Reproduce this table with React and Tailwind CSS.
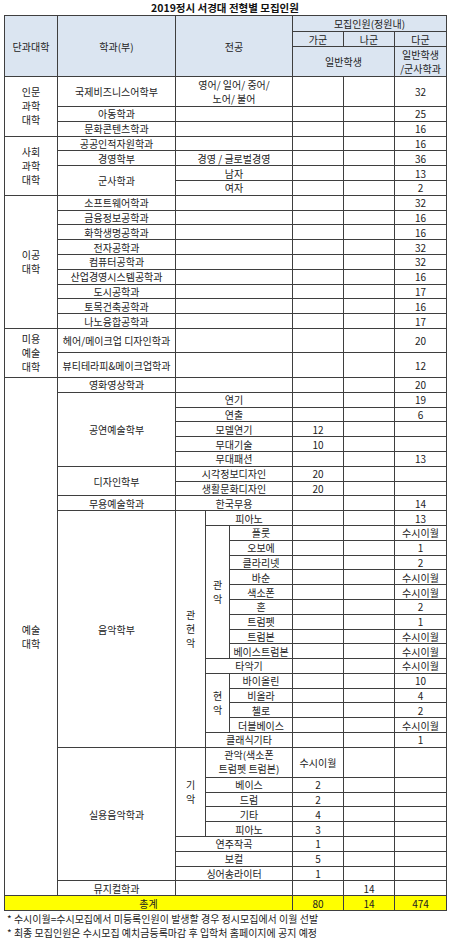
import React from "react";

const font = { fontFamily: '"Noto Sans CJK KR", "Noto Sans", sans-serif' };

const Td = ({ children, className = "", ...props }) => (
  <td
    className={`border border-[#3f3f3f] p-0 text-center align-middle ${className}`}
    {...props}
  >
    {children}
  </td>
);

// multi-line cell text, a little more air between the lines
const Lines = ({ items }) => (
  <span className="block leading-[14px]">
    {items.map((t, i) => (
      <span key={i} className="block">
        {t}
      </span>
    ))}
  </span>
);

// three 모집인원 columns: 가군 / 나군 / 다군
const nums = (a = "", b = "", c = "") => (
  <>
    <Td>{a}</Td>
    <Td>{b}</Td>
    <Td>{c}</Td>
  </>
);

const R = "h-[14.8px]";

const App = () => {
  return (
    <div className="w-[450px] bg-white text-[#222] text-[10px] leading-[13px]" style={font}>
      {/* title */}
      <h1 className="h-[15px] text-center text-[10.5px] font-bold leading-[15px] text-[#111]">
        2019정시 서경대 전형별 모집인원
      </h1>

      <table className="ml-[4px] w-[442px] table-fixed border-collapse">
        <colgroup>
          <col className="w-[53px]" />
          <col className="w-[118px]" />
          <col className="w-[30px]" />
          <col className="w-[24px]" />
          <col className="w-[63px]" />
          <col className="w-[51px]" />
          <col className="w-[51px]" />
          <col className="w-[52px]" />
        </colgroup>
        <tbody>
          {/* header */}
          <tr className="h-[16px] bg-[#dbe5f1]">
            <Td rowSpan={3}>단과대학</Td>
            <Td rowSpan={3}>학과(부)</Td>
            <Td rowSpan={3} colSpan={3}>전공</Td>
            <Td colSpan={3}>모집인원(정원내)</Td>
          </tr>
          <tr className="h-[15px] bg-[#dbe5f1]">
            <Td>가군</Td>
            <Td>나군</Td>
            <Td>다군</Td>
          </tr>
          <tr className="h-[30px] bg-[#dbe5f1]">
            <Td colSpan={2}>일반학생</Td>
            <Td>
              <Lines items={["일반학생", "/군사학과"]} />
            </Td>
          </tr>

          {/* 인문과학대학 */}
          <tr className="h-[30px]">
            <Td rowSpan={3}>
              <Lines items={["인문", "과학", "대학"]} />
            </Td>
            <Td>국제비즈니스어학부</Td>
            <Td colSpan={3}>
              <Lines items={["영어/ 일어/ 중어/", "노어/ 불어"]} />
            </Td>
            {nums("", "", 32)}
          </tr>
          <tr className={R}>
            <Td>아동학과</Td>
            <Td colSpan={3} />
            {nums("", "", 25)}
          </tr>
          <tr className={R}>
            <Td>문화콘텐츠학과</Td>
            <Td colSpan={3} />
            {nums("", "", 16)}
          </tr>

          {/* 사회과학대학 */}
          <tr className={R}>
            <Td rowSpan={4}>
              <Lines items={["사회", "과학", "대학"]} />
            </Td>
            <Td>공공인적자원학과</Td>
            <Td colSpan={3} />
            {nums("", "", 16)}
          </tr>
          <tr className={R}>
            <Td>경영학부</Td>
            <Td colSpan={3}>경영 / 글로벌경영</Td>
            {nums("", "", 36)}
          </tr>
          <tr className={R}>
            <Td rowSpan={2}>군사학과</Td>
            <Td colSpan={3}>남자</Td>
            {nums("", "", 13)}
          </tr>
          <tr className={R}>
            <Td colSpan={3}>여자</Td>
            {nums("", "", 2)}
          </tr>

          {/* 이공대학 */}
          {[
            ["소프트웨어학과", 32],
            ["금융정보공학과", 16],
            ["화학생명공학과", 16],
            ["전자공학과", 32],
            ["컴퓨터공학과", 32],
            ["산업경영시스템공학과", 16],
            ["도시공학과", 17],
            ["토목건축공학과", 16],
            ["나노융합공학과", 17],
          ].map(([name, n], i) => (
            <tr key={name} className={R}>
              {i === 0 && (
                <Td rowSpan={9}>
                  <Lines items={["이공", "대학"]} />
                </Td>
              )}
              <Td>{name}</Td>
              <Td colSpan={3} />
              {nums("", "", n)}
            </tr>
          ))}

          {/* 미용예술대학 */}
          <tr className="h-[24.5px]">
            <Td rowSpan={2}>
              <Lines items={["미용", "예술", "대학"]} />
            </Td>
            <Td>헤어/메이크업 디자인학과</Td>
            <Td colSpan={3} />
            {nums("", "", 20)}
          </tr>
          <tr className="h-[24.5px]">
            <Td>뷰티테라피&amp;메이크업학과</Td>
            <Td colSpan={3} />
            {nums("", "", 12)}
          </tr>

          {/* 예술대학 */}
          <tr className={R}>
            <Td rowSpan={34}>
              <Lines items={["예술", "대학"]} />
            </Td>
            <Td>영화영상학과</Td>
            <Td colSpan={3} />
            {nums("", "", 20)}
          </tr>
          <tr className={R}>
            <Td rowSpan={5}>공연예술학부</Td>
            <Td colSpan={3}>연기</Td>
            {nums("", "", 19)}
          </tr>
          <tr className={R}>
            <Td colSpan={3}>연출</Td>
            {nums("", "", 6)}
          </tr>
          <tr className={R}>
            <Td colSpan={3}>모델연기</Td>
            {nums(12)}
          </tr>
          <tr className={R}>
            <Td colSpan={3}>무대기술</Td>
            {nums(10)}
          </tr>
          <tr className={R}>
            <Td colSpan={3}>무대패션</Td>
            {nums("", "", 13)}
          </tr>
          <tr className={R}>
            <Td rowSpan={2}>디자인학부</Td>
            <Td colSpan={3}>시각정보디자인</Td>
            {nums(20)}
          </tr>
          <tr className={R}>
            <Td colSpan={3}>생활문화디자인</Td>
            {nums(20)}
          </tr>
          <tr className={R}>
            <Td>무용예술학과</Td>
            <Td colSpan={3}>한국무용</Td>
            {nums("", "", 14)}
          </tr>

          {/* 음악학부 */}
          <tr className={R}>
            <Td rowSpan={16}>음악학부</Td>
            <Td rowSpan={16}>
              <Lines items={["관", "현", "악"]} />
            </Td>
            <Td colSpan={2}>피아노</Td>
            {nums("", "", 13)}
          </tr>
          {[
            ["플룻", "수시이월"],
            ["오보에", 1],
            ["클라리넷", 2],
            ["바순", "수시이월"],
            ["색소폰", "수시이월"],
            ["혼", 2],
            ["트럼펫", 1],
            ["트럼본", "수시이월"],
            ["베이스트럼본", "수시이월"],
          ].map(([name, n], i) => (
            <tr key={name} className={R}>
              {i === 0 && (
                <Td rowSpan={9}>
                  <Lines items={["관", "악"]} />
                </Td>
              )}
              <Td>{name}</Td>
              {nums("", "", n)}
            </tr>
          ))}
          <tr className={R}>
            <Td colSpan={2}>타악기</Td>
            {nums("", "", "수시이월")}
          </tr>
          {[
            ["바이올린", 10],
            ["비올라", 4],
            ["첼로", 2],
            ["더블베이스", "수시이월"],
          ].map(([name, n], i) => (
            <tr key={name} className={R}>
              {i === 0 && (
                <Td rowSpan={4}>
                  <Lines items={["현", "악"]} />
                </Td>
              )}
              <Td>{name}</Td>
              {nums("", "", n)}
            </tr>
          ))}
          <tr className={R}>
            <Td colSpan={2}>클래식기타</Td>
            {nums("", "", 1)}
          </tr>

          {/* 실용음악학과 */}
          <tr className="h-[30px]">
            <Td rowSpan={8}>실용음악학과</Td>
            <Td rowSpan={5}>
              <Lines items={["기", "악"]} />
            </Td>
            <Td colSpan={2}>
              <Lines items={["관악(색소폰", "트럼펫 트럼본)"]} />
            </Td>
            {nums("수시이월")}
          </tr>
          {[
            ["베이스", 2],
            ["드럼", 2],
            ["기타", 4],
            ["피아노", 3],
          ].map(([name, n]) => (
            <tr key={name} className={R}>
              <Td colSpan={2}>{name}</Td>
              {nums(n)}
            </tr>
          ))}
          {[
            ["연주작곡", 1],
            ["보컬", 5],
            ["싱어송라이터", 1],
          ].map(([name, n]) => (
            <tr key={name} className={R}>
              <Td colSpan={3}>{name}</Td>
              {nums(n)}
            </tr>
          ))}
          <tr className={R}>
            <Td>뮤지컬학과</Td>
            <Td colSpan={3} />
            {nums("", 14)}
          </tr>

          {/* total */}
          <tr className={`${R} bg-[#ffff00]`}>
            <Td colSpan={5}>총계</Td>
            {nums(80, 14, 474)}
          </tr>
        </tbody>
      </table>

      <div className="mt-[1px] pl-[7px] leading-[13.5px]">
        <p>* 수시이월=수시모집에서 미등록인원이 발생할 경우 정시모집에서 이월 선발</p>
        <p>* 최종 모집인원은 수시모집 예치금등록마감 후 입학처 홈페이지에 공지 예정</p>
      </div>
    </div>
  );
};

export default App;
